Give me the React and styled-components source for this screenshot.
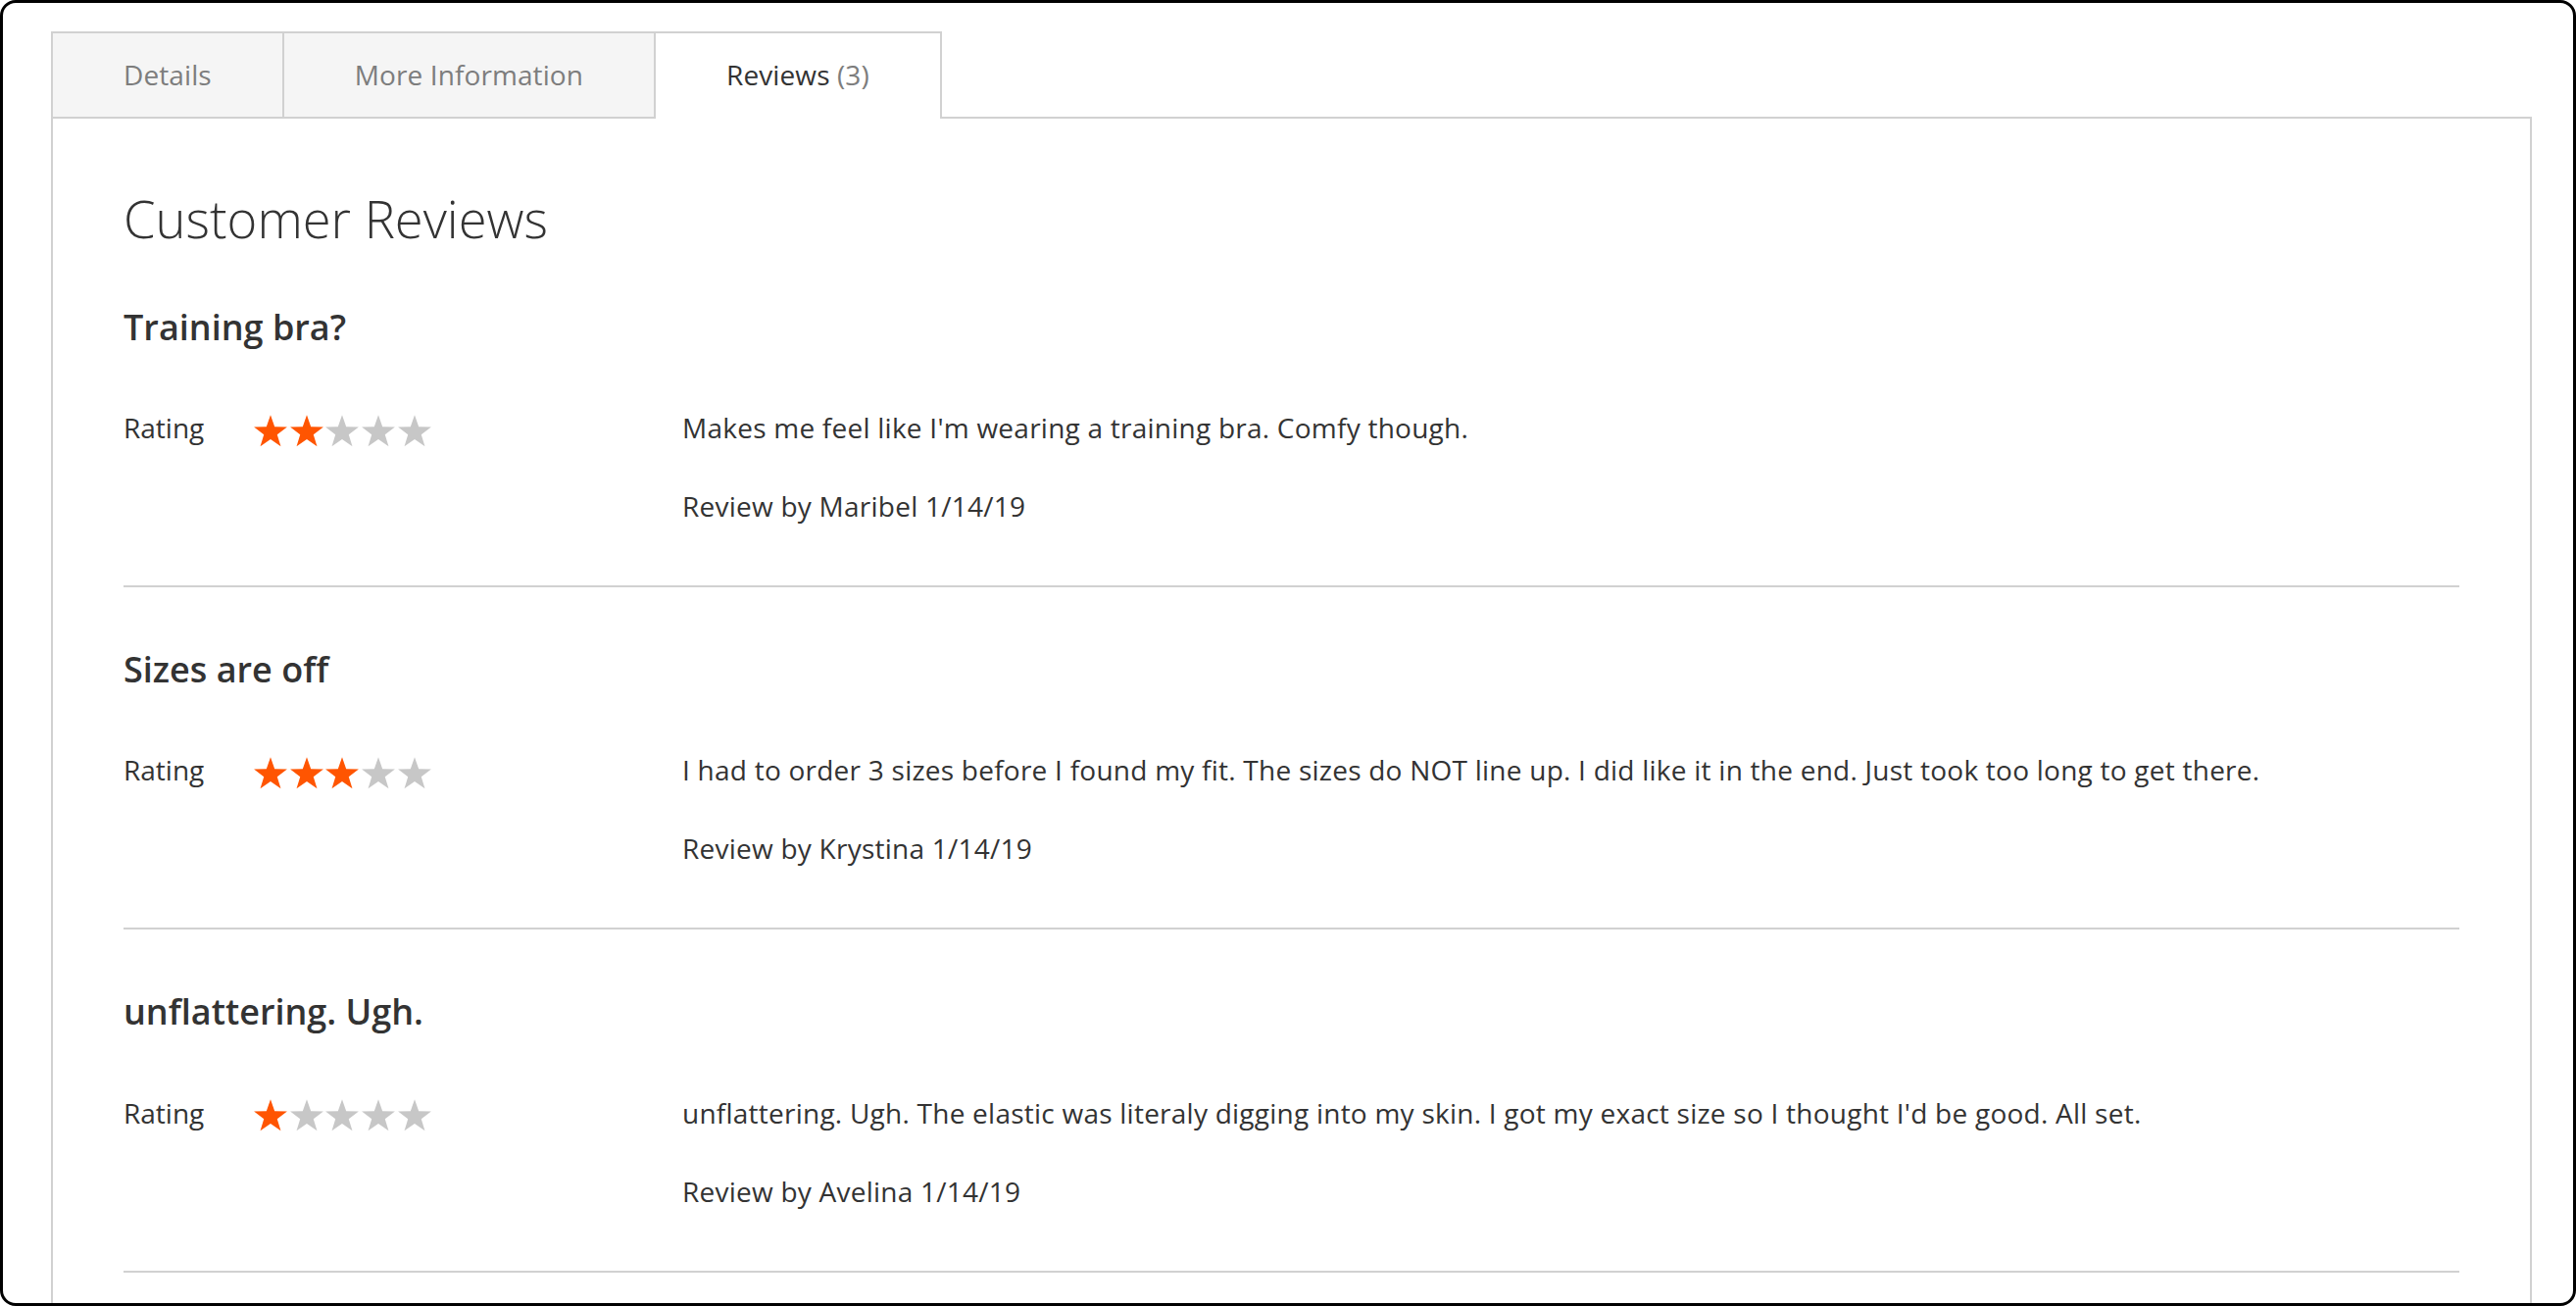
import React from 'react'
import styled, { createGlobalStyle } from 'styled-components'

const GlobalStyle = createGlobalStyle`
  html, body {
    margin: 0;
    padding: 0;
    background: #fff;
  }
  body {
    font-family: "Open Sans", "Liberation Sans", sans-serif;
    color: #333;
    overflow: hidden;
  }
  * { box-sizing: border-box; }
`

const Frame = styled.div`
  width: 2628px;
  height: 1332px;
  border: 3px solid #000;
  border-radius: 16px;
  overflow: hidden;
  background: #fff;
  padding: 29px 42px 0 49px;
`

const TabBar = styled.div`
  display: flex;
  align-items: flex-start;
`

const Tab = styled.div`
  position: relative;
  z-index: ${(p) => (p.active ? 1 : 0)};
  height: ${(p) => (p.active ? '89px' : '87px')};
  margin-bottom: ${(p) => (p.active ? '-2px' : '0')};
  margin-right: -2px;
  padding: 0 72px;
  border: 2px solid #d1d1d1;
  border-bottom: 0;
  background: ${(p) => (p.active ? '#fff' : '#f5f5f5')};
  color: ${(p) => (p.active ? '#333' : '#7d7d7d')};
  font-size: 28px;
  letter-spacing: 0.1px;
  line-height: 85px;
  white-space: nowrap;
  cursor: pointer;
`

const Counter = styled.span`
  color: #7d7d7d;
`

const Panel = styled.div`
  border: 2px solid #d1d1d1;
  padding: 72px 72px 60px;
`

const Heading = styled.h2`
  margin: 0;
  font-size: 52.5px;
  font-weight: 300;
  line-height: 59px;
  color: #333;
`

const Review = styled.div`
  padding: 60px 0 60px;
  border-bottom: 2px solid #d1d1d1;

  & + & {
    padding-top: 62px;
  }
`

const ReviewTitle = styled.div`
  margin-bottom: 60px;
  font-size: 36px;
  font-weight: 600;
  line-height: 1.2;
`

const ReviewBody = styled.div`
  display: grid;
  grid-template-columns: 570px 1fr;
`

const Ratings = styled.div`
  display: flex;
  align-items: center;
  height: 42px;
`

const RatingLabel = styled.span`
  width: 133px;
  font-size: 28px;
  line-height: 42px;
`

const Stars = styled.div`
  display: flex;
  gap: 2.7px;
  margin-top: 6px;
`

const ReviewText = styled.p`
  margin: 0 0 38px;
  font-size: 28px;
  letter-spacing: 0.24px;
  line-height: 42px;
`

const Author = styled.p`
  margin: 0;
  font-size: 28px;
  letter-spacing: 0.24px;
  line-height: 42px;
`

const Star = ({ on }) => (
  <svg width="34" height="33" viewBox="-0.2 0 34.4 33">
    <polygon
      fill={on ? '#ff5501' : '#c7c7c7'}
      points="17,0 21.23,12.18 34.12,12.44 23.85,20.22 27.58,32.56 17,25.2 6.42,32.56 10.15,20.22 -0.12,12.44 12.77,12.18"
    />
  </svg>
)

const reviews = [
  {
    title: 'Training bra?',
    rating: 2,
    text: "Makes me feel like I'm wearing a training bra. Comfy though.",
    author: 'Maribel',
    date: '1/14/19',
  },
  {
    title: 'Sizes are off',
    rating: 3,
    text: 'I had to order 3 sizes before I found my fit. The sizes do NOT line up. I did like it in the end. Just took too long to get there.',
    author: 'Krystina',
    date: '1/14/19',
  },
  {
    title: 'unflattering. Ugh.',
    rating: 1,
    text: "unflattering. Ugh. The elastic was literaly digging into my skin. I got my exact size so I thought I'd be good. All set.",
    author: 'Avelina',
    date: '1/14/19',
  },
]

const App = () => {
  return (
    <>
      <GlobalStyle />
      <Frame>
        <TabBar>
          <Tab>Details</Tab>
          <Tab>More Information</Tab>
          <Tab active>
            Reviews <Counter>(3)</Counter>
          </Tab>
        </TabBar>
        <Panel>
          <Heading>Customer Reviews</Heading>
          {reviews.map((r) => (
            <Review key={r.author}>
              <ReviewTitle>{r.title}</ReviewTitle>
              <ReviewBody>
                <Ratings>
                  <RatingLabel>Rating</RatingLabel>
                  <Stars>
                    {[1, 2, 3, 4, 5].map((n) => (
                      <Star key={n} on={n <= r.rating} />
                    ))}
                  </Stars>
                </Ratings>
                <div>
                  <ReviewText>{r.text}</ReviewText>
                  <Author>
                    Review by {r.author} {r.date}
                  </Author>
                </div>
              </ReviewBody>
            </Review>
          ))}
        </Panel>
      </Frame>
    </>
  )
}

export default App
